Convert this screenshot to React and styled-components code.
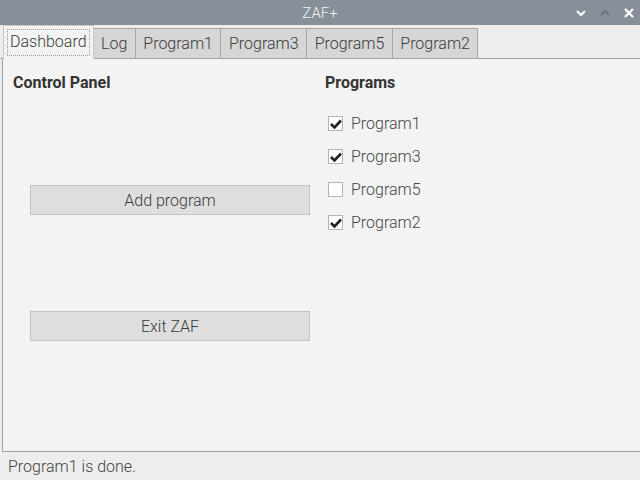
import React from 'react';
import styled, { createGlobalStyle } from 'styled-components';

const Global = createGlobalStyle`
  html, body { margin: 0; padding: 0; background: #f3f3f3; }
  body { font-family: Roboto, "Liberation Sans", sans-serif; }
`;

const Window = styled.div`
  width: 640px;
  height: 480px;
  display: flex;
  flex-direction: column;
  background: #ededed;
  overflow: hidden;
`;

const TitleBar = styled.div`
  height: 25px;
  flex: none;
  background: #878f99;
  position: relative;
  display: flex;
  align-items: center;
  justify-content: center;
  color: #f2f4f6;
  font-size: 15px;
  font-weight: 300;
`;

const WinButtons = styled.div`
  position: absolute;
  right: 6px;
  top: 0;
  height: 25px;
  display: flex;
  align-items: center;
  gap: 14px;
`;

const TabBar = styled.div`
  height: 34px;
  flex: none;
  display: flex;
  align-items: flex-end;
  padding-left: 3px;
  border-bottom: 1px solid #a3a3a3;
  box-sizing: border-box;
`;

const Tab = styled.div`
  box-sizing: border-box;
  height: ${p => (p.active ? '34px' : '30px')};
  margin-bottom: ${p => (p.active ? '-1px' : '0')};
  padding: 0 ${p => (p.active ? '3px' : '7.5px')};
  display: flex;
  align-items: center;
  font-size: 16px;
  font-weight: 300;
  color: #3a3a3a;
  background: ${p => (p.active ? '#f3f3f3' : '#d6d6d6')};
  border: 1px solid ${p => (p.active ? '#c8c8c8' : '#a5a5a5')};
  border-bottom: ${p => (p.active ? 'none' : '0')};
  & + & { border-left: ${p => (p.active ? '1px solid #c8c8c8' : 'none')}; }
`;

const Focus = styled.span`
  border: 1px dotted #9a9a9a;
  padding: 2px 2px 3px;
  line-height: 20px;
`;

const Panel = styled.div`
  flex: 1;
  background: #f3f3f3;
  border-left: 1px solid #a3a3a3;
  margin-left: 2px;
  display: grid;
  grid-template-columns: 312px 1fr;
  padding: 13px 0 0 10px;
  border-bottom: 1px solid #a3a3a3;
`;

const Column = styled.div`
  display: flex;
  flex-direction: column;
`;

const Heading = styled.div`
  font-weight: bold;
  font-size: 16px;
  color: #333;
  line-height: 22px;
  margin-bottom: ${p => p.gap || 0}px;
`;

const Button = styled.div`
  margin: ${p => p.top}px 0 0 17px;
  width: 280px;
  height: 30px;
  box-sizing: border-box;
  background: #dedede;
  border: 1px solid #c2c2c2;
  display: flex;
  align-items: center;
  justify-content: center;
  font-size: 16px;
  font-weight: 300;
  color: #3a3a3a;
`;

const CheckRow = styled.label`
  display: flex;
  align-items: center;
  height: 33px;
  padding-left: 3px;
  font-size: 16px;
  font-weight: 300;
  color: #444;
`;

const Box = styled.span`
  width: 15px;
  height: 15px;
  box-sizing: border-box;
  border: 1px solid #b4b4b4;
  background: #fff;
  margin-right: 8px;
  display: flex;
  align-items: center;
  justify-content: center;
`;

const StatusBar = styled.div`
  height: 28px;
  flex: none;
  display: flex;
  align-items: center;
  padding-left: 8px;
  font-size: 16px;
  font-weight: 300;
  color: #444;
`;

const Check = () => (
  <svg width="12" height="10" viewBox="0 0 12 10">
    <path d="M1 5 L4.5 8.5 L11 1.5" fill="none" stroke="#222" strokeWidth="2.6" />
  </svg>
);

const programs = [
  { name: 'Program1', on: true },
  { name: 'Program3', on: true },
  { name: 'Program5', on: false },
  { name: 'Program2', on: true },
];

export default function App() {
  return (
    <Window>
      <Global />
      <TitleBar>
        ZAF+
        <WinButtons>
          <svg width="10" height="8" viewBox="0 0 10 8">
            <path d="M1 2 L5 6 L9 2" fill="none" stroke="#fff" strokeWidth="2" />
          </svg>
          <svg width="10" height="8" viewBox="0 0 10 8">
            <path d="M1 6 L5 2 L9 6" fill="none" stroke="#6a7079" strokeWidth="2" />
          </svg>
          <svg width="10" height="10" viewBox="0 0 10 10">
            <path d="M1 1 L9 9 M9 1 L1 9" fill="none" stroke="#fff" strokeWidth="2.2" />
          </svg>
        </WinButtons>
      </TitleBar>
      <TabBar>
        <Tab active><Focus>Dashboard</Focus></Tab>
        {['Log', 'Program1', 'Program3', 'Program5', 'Program2'].map(t => (
          <Tab key={t}>{t}</Tab>
        ))}
      </TabBar>
      <Panel>
        <Column>
          <Heading>Control Panel</Heading>
          <Button top={91}>Add program</Button>
          <Button top={96}>Exit ZAF</Button>
        </Column>
        <Column>
          <Heading gap={13}>Programs</Heading>
          {programs.map(p => (
            <CheckRow key={p.name}>
              <Box>{p.on && <Check />}</Box>
              {p.name}
            </CheckRow>
          ))}
        </Column>
      </Panel>
      <StatusBar>Program1 is done.</StatusBar>
    </Window>
  );
}
